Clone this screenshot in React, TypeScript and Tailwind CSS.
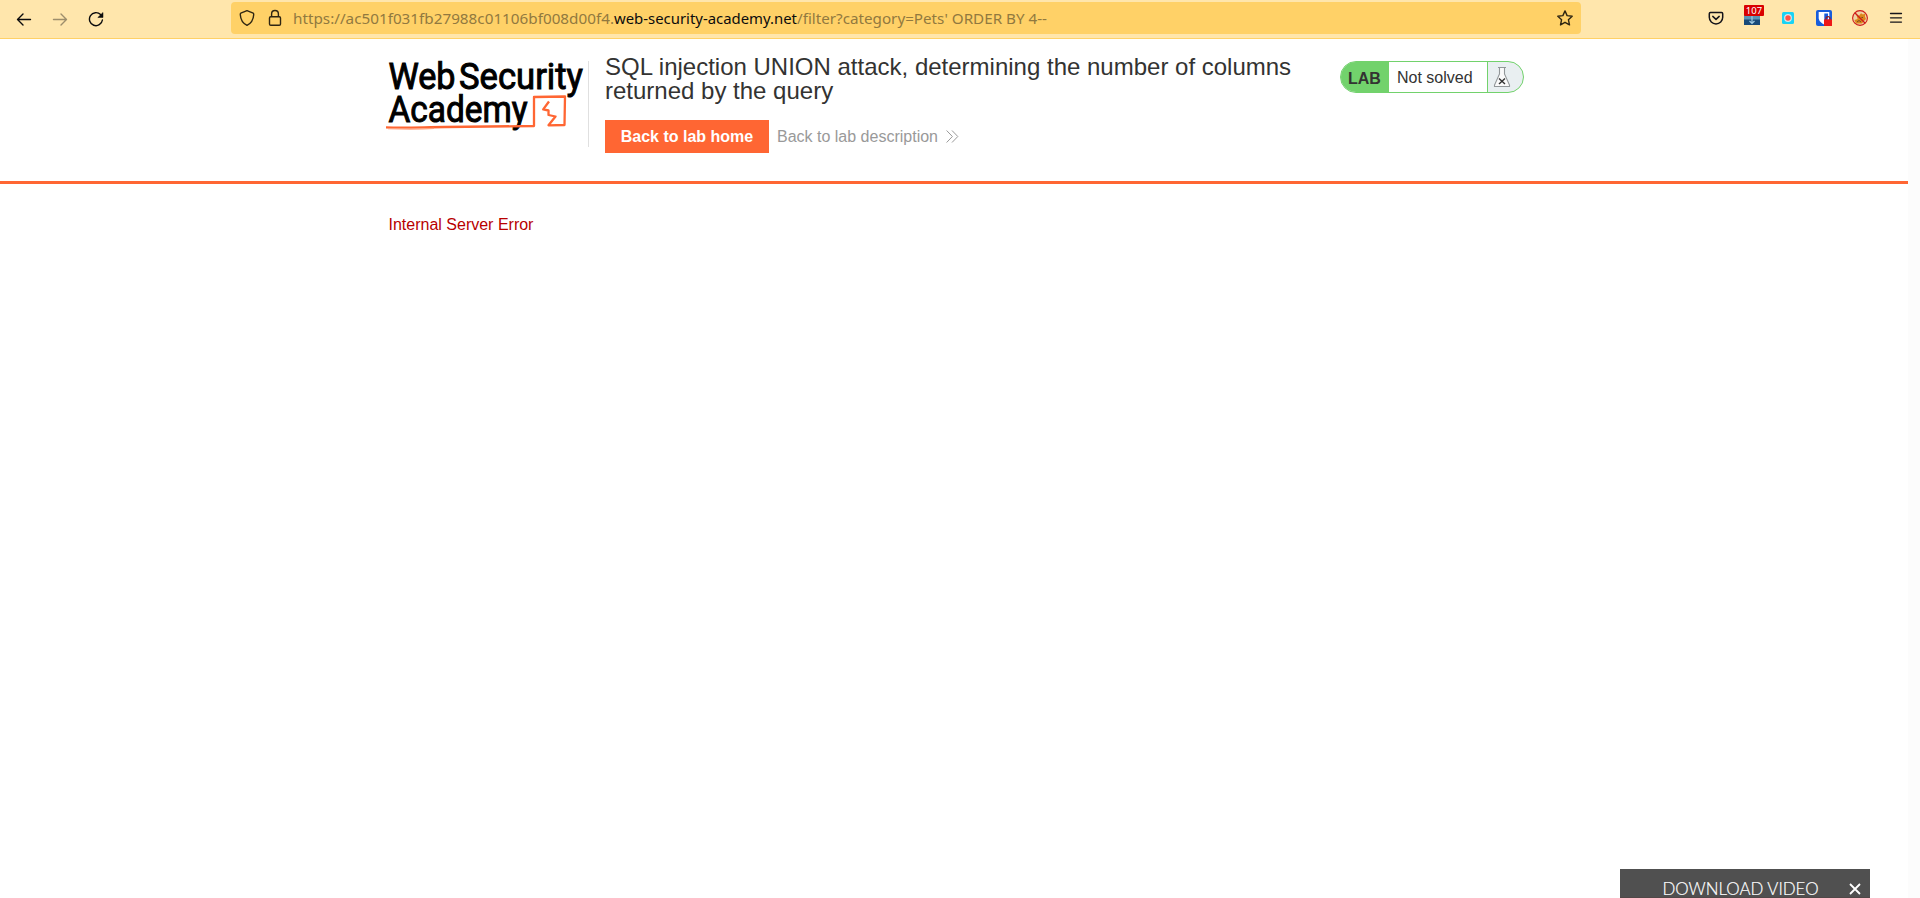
import React from "react";

function Toolbar() {
  return (
    <div className="flex h-[39px] shrink-0 items-start border-b border-[#ffd167] bg-[#ffe6ac] text-[#15141a]">
      <div className="flex h-[38px] w-[231px] items-center pl-4">
        <svg width="16" height="16" viewBox="0 0 16 16" fill="none" stroke="#0c0c0d" strokeWidth="1.4" strokeLinecap="round" strokeLinejoin="round">
          <path d="M14.5 8.5H1.5M7 3L1.5 8.5L7 14" />
        </svg>
        <svg className="ml-5 opacity-40" width="16" height="16" viewBox="0 0 16 16" fill="none" stroke="#0c0c0d" strokeWidth="1.4" strokeLinecap="round" strokeLinejoin="round">
          <path d="M1.5 8.5H14.5M9 3L14.5 8.5L9 14" />
        </svg>
        <svg className="ml-5" width="16" height="16" viewBox="0 0 16 16">
          <path d="M12.6 3.6A6.5 6.5 0 1 0 14.4 9" fill="none" stroke="#0c0c0d" strokeWidth="1.4" strokeLinecap="round" />
          <path d="M15 1.5V6.5H9.8Z" fill="#0c0c0d" stroke="#0c0c0d" strokeWidth=".5" strokeLinejoin="round" />
        </svg>
      </div>
      <div className="mt-0.5 flex h-8 w-[1350px] items-center rounded-[4px] bg-[#ffd167] px-2">
        <svg width="16" height="18" viewBox="0 0 16 18" fill="none" stroke="#2f2612" strokeWidth="1.4" strokeLinejoin="round">
          <path d="M8 1.6L14.2 4.1C14.7 4.4 14.8 5 14.7 5.7C14.4 10.2 12 14.4 8 16.3C4 14.4 1.6 10.2 1.3 5.7C1.2 5 1.3 4.4 1.8 4.1Z" />
        </svg>
        <svg className="ml-3" width="16" height="18" viewBox="0 0 16 18" fill="none" stroke="#2f2612" strokeWidth="1.4">
          <rect x="2.5" y="7.7" width="11" height="8.6" rx="1.3" />
          <path d="M4.6 7.7V4.9a3.4 3.4 0 0 1 6.8 0V7.7" />
        </svg>
        <div className="ml-[10px] flex whitespace-pre font-['Noto_Sans'] text-[15px] leading-5">
          <svg width="760" height="24" viewBox="0 0 760 24" fill="#91793f">
            <text x="0" y="18" textLength="321" lengthAdjust="spacingAndGlyphs">https://ac501f031fb27988c01106bf008d00f4.</text>
            <text x="321" y="18" textLength="183" lengthAdjust="spacingAndGlyphs" fill="#0c0c0d">web-security-academy.net</text>
            <text x="504" y="18" textLength="250" lengthAdjust="spacingAndGlyphs" xmlSpace="preserve">/filter?category=Pets' ORDER BY 4--</text>
          </svg>
        </div>
        <svg className="ml-auto" width="16" height="16" viewBox="0 0 16 16" fill="none" stroke="#2f2612" strokeWidth="1.4" strokeLinejoin="round">
          <path d="M8 .9L10.1 5.6L15.2 6.2L11.4 9.7L12.5 14.9L8 12.3L3.5 14.9L4.6 9.7L.8 6.2L5.9 5.6Z" />
        </svg>
      </div>
      <div className="flex h-[36px] items-center gap-4 pl-[125px]">
        <svg width="20" height="20" viewBox="0 0 20 20" fill="none" stroke="#15141a" strokeWidth="1.5" strokeLinecap="round" strokeLinejoin="round">
          <path d="M4.4 4.6H15.6Q16.7 4.6 16.7 5.8V9.3A6.7 6.6 0 0 1 3.3 9.3V5.8Q3.3 4.6 4.4 4.6ZM6.8 8.4L10 11.4L13.2 8.4" />
        </svg>
        <div className="relative h-5 w-5">
          <svg width="20" height="20" viewBox="0 0 20 20">
            <rect x="2" y="7" width="16" height="5" fill="#5c93b5" />
            <rect x="2" y="11.5" width="16" height="5.5" fill="#184a79" />
            <path d="M10 7V15.5M7.5 13L10 15.5L12.5 13" fill="none" stroke="#9cc8e2" strokeWidth="1.2" />
          </svg>
          <span className="absolute -top-[3px] left-[2px] h-[11px] w-5 rounded-[1px] bg-[#d90000] text-center font-['Noto_Sans'] text-[9.5px] leading-[11px] text-white">107</span>
        </div>
        <svg width="20" height="20" viewBox="0 0 20 20">
          <rect x="4" y="4" width="12" height="12" rx="1.5" fill="#19d3f5" />
          <circle cx="10" cy="10" r="3.9" fill="#d9e6ea" />
          <circle cx="10" cy="10" r="2.7" fill="#ff5146" />
        </svg>
        <svg width="20" height="20" viewBox="0 0 20 20">
          <rect x="2" y="2" width="16" height="16" rx="2" fill="#175ddc" />
          <path d="M4.7 4H15.3V10C15.3 13 12 15.6 10 16.4C8 15.6 4.7 13 4.7 10Z" fill="#fff" />
          <path d="M10.3 5.5H14V10C14 12 12 14 10.3 14.8Z" fill="#175ddc" />
          <rect x="10" y="11.3" width="8" height="6.7" rx=".6" fill="#ed1717" />
          <path d="M12 11.5V10.7a2 2 0 0 1 4 0V11.5" fill="none" stroke="#921c29" strokeWidth="1.3" />
        </svg>
        <svg width="20" height="20" viewBox="0 0 20 20">
          <circle cx="10" cy="10" r="7.4" fill="#f0d2a4" />
          <path d="M6.5 7L9 7.7L11 5.2L13 6.5L15.4 5.2L15 8.6L16 11L13.7 13.3L12 15.5H6L4.4 12L7.6 11Z" fill="#dc861b" />
          <path d="M7 14L9 12.5L11 14M11.5 9.5H13" fill="none" stroke="#744725" />
          <circle cx="10" cy="10" r="7.4" fill="none" stroke="#ce1919" strokeWidth="1.1" />
          <path d="M4.8 4.8L15.2 15.2" stroke="#ce1919" strokeWidth="1.3" />
        </svg>
        <svg width="20" height="20" viewBox="0 0 20 20" stroke="#15141a" strokeWidth="1.3" strokeLinecap="round">
          <path d="M4.5 5.5H15.5M4.5 9.8H15.5M4.5 14.1H15.5" />
        </svg>
      </div>
    </div>
  );
}

function Logo() {
  return (
    <svg className="shrink-0 overflow-visible" width="203" height="86" viewBox="385 61 203 86">
      <g fill="#000" stroke="#000" strokeWidth="1" fontFamily="Roboto" fontWeight="400" fontSize="37">
        <text x="388.5" y="89.3" textLength="67" lengthAdjust="spacingAndGlyphs">Web</text>
        <text x="459" y="89.3" textLength="124" lengthAdjust="spacingAndGlyphs">Security</text>
        <text x="388.5" y="121.7" textLength="139" lengthAdjust="spacingAndGlyphs">Academy</text>
      </g>
      <path d="M386 127.4C408 128.2 426 127 445 127L534 126V97L565 96.5L564.5 125L548.5 125.3L555.5 116.5L548.5 115V110.5L543.2 109.4L549 101.5" fill="none" stroke="#ff6633" strokeWidth="2.3" strokeLinejoin="round" />
      <path d="M388 128.7C405 129.2 422 129.2 434 128.4" fill="none" stroke="#ffa27f" strokeWidth="1.2" />
    </svg>
  );
}

function LabStatus() {
  return (
    <div className="mt-[22px] flex h-8 w-[184px] overflow-hidden rounded-full border border-[#72d26c] bg-[#e9eff1] text-base text-[#333332]">
      <span className="w-12 bg-[#72d26c] pl-[7px] font-bold leading-[33px]">LAB</span>
      <span className="w-[98px] bg-white pl-2 leading-[31px]">Not solved</span>
      <span className="flex flex-1 items-center border-l border-[#72d26c] pl-[5px]">
        <svg width="18" height="22" viewBox="0 0 18 22" fill="none">
          <path d="M5 1.5H13M6.5 1.5V8L1.5 19V20.5H16.5V19L11.5 8V1.5" fill="#fafafa" stroke="#929799" strokeWidth="1.1" />
          <path d="M6 12.5L12 18M12 12.5L6 18" stroke="#333332" strokeWidth="1.4" />
        </svg>
      </span>
    </div>
  );
}

export default function App() {
  return (
    <div className="flex h-[898px] w-full flex-col overflow-hidden bg-white font-['Liberation_Sans',sans-serif]">
      <Toolbar />
      <div className="flex flex-1">
        <div className="flex flex-1 flex-col">
          <header className="flex h-[145px] items-start border-b-[3px] border-[#ff6633] pl-[385px]">
            <div className="pt-[22px]"><Logo /></div>
            <div className="mt-[22px] h-[86px] w-px bg-[#e0e0e0]" />
            <section className="w-[751px] pl-4 pt-4">
              <h1 className="text-2xl leading-6 text-[#333332]">
                SQL injection UNION attack, determining the number of columns<br />returned by the query
              </h1>
              <div className="mt-[17px] flex items-center">
                <button className="h-[33px] w-[164px] bg-[#ff6633] text-base font-bold leading-[33px] text-white">Back to lab home</button>
                <a className="ml-2 flex items-center text-base leading-[33px] text-[#999]">
                  Back to lab description
                  <svg className="ml-2" width="13" height="13" viewBox="0 0 13 13" fill="none" stroke="#999">
                    <path d="M.6 .5L6.4 6.5L.6 12.5M6 .5L11.8 6.5L6 12.5" />
                  </svg>
                </a>
              </div>
            </section>
            <LabStatus />
          </header>
          <main className="flex flex-1 flex-col justify-between">
            <p className="pl-[388.5px] pt-[29px] text-base leading-6 text-[#b80000]">Internal Server Error</p>
            <div className="ml-auto mr-[38px] flex h-[29px] w-[250px] items-start border-b border-[#514747] bg-[#505050] pl-[42px] pt-2 text-white">
              <svg className="overflow-visible" width="158" height="20" viewBox="0 0 158 20">
                <text x="0.5" y="18" fontFamily="Lato" fontWeight="300" fontSize="17.5" fill="#fff" stroke="#fff" strokeWidth=".2" textLength="156" lengthAdjust="spacingAndGlyphs">DOWNLOAD VIDEO</text>
              </svg>
              <svg className="ml-[29px] mt-1.5" width="12" height="12" viewBox="0 0 12 12" stroke="#fff" strokeWidth="1.8">
                <path d="M1 1L11 11M11 1L1 11" />
              </svg>
            </div>
          </main>
        </div>
        <div className="w-3 bg-[#fcfcfc]" />
      </div>
    </div>
  );
}
